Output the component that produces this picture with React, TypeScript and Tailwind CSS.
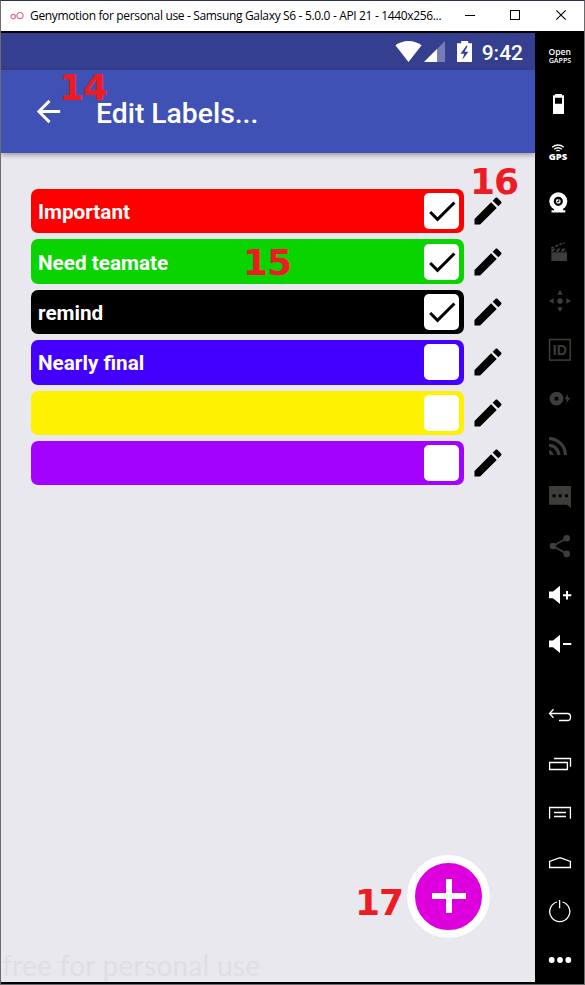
import React from "react";

const labels = [
  { name: "Important", bg: "bg-[#ff0000]", checked: true },
  { name: "Need teamate", bg: "bg-[#0ad400]", checked: true },
  { name: "remind", bg: "bg-black", checked: true },
  { name: "Nearly final", bg: "bg-[#4400ff]", checked: false },
  { name: "", bg: "bg-[#fff200]", checked: false },
  { name: "", bg: "bg-[#a200ff]", checked: false },
];

function TitleBar() {
  return (
    <div className="flex h-[30px] w-full shrink-0 items-center bg-white">
      <svg width="14" height="10" viewBox="0 0 14 10" className="ml-[9px] shrink-0" fill="none" stroke="#e4688f" strokeWidth="1.2">
        <circle cx="3.2" cy="5.6" r="2.2" />
        <circle cx="10" cy="4.6" r="3.1" />
      </svg>
      <div className="ml-[6px] w-[420px] whitespace-nowrap font-['Open_Sans','Noto_Sans',sans-serif] text-[12px] leading-[30px] tracking-[-0.34px] text-black">
        Genymotion for personal use - Samsung Galaxy S6 - 5.0.0 - API 21 - 1440x256...
      </div>
      <svg width="134" height="30" viewBox="450 1 134 30" className="shrink-0" fill="none" stroke="#000" shapeRendering="crispEdges">
        <path d="M465 15.5h10" />
        <rect x="510.5" y="10.5" width="9" height="9" />
        <path d="M556.3 10.3l9.4 9.4M565.7 10.3l-9.4 9.4" shapeRendering="auto" strokeWidth="1.1" />
      </svg>
    </div>
  );
}

function StatusBar() {
  return (
    <div className="flex h-[37px] shrink-0 items-center justify-end bg-[#34408f] pr-[12px] text-white">
      <svg width="80" height="24" viewBox="394 40 80 24" fill="#fff">
        <path d="M408.5 62 395.4 45.3C399 42.600 403.500 41 408.500 41s9.500 1.600 13.100 4.300z" />
        <path d="M445 41v21h-21z" fillOpacity=".32" />
        <path d="M437 49v13h-13z" />
        <path fillRule="evenodd" d="M461.200 41h7v2.200h3.800V62h-15V43.200h4.200zM466.300 45.700l-5.800 8h3.700l-1.900 6 6.200-8h-3.900l3.100-6z" />
      </svg>
      <span className="ml-[8px] mt-[3px] font-[Roboto,sans-serif] text-[21px] font-medium leading-[37px]">9:42</span>
    </div>
  );
}

function AppBar() {
  return (
    <div className="relative z-10 flex h-[83px] shrink-0 items-center bg-[#3f51b5] pl-[30px] text-white shadow-[0_2px_5px_rgba(0,0,0,0.35)]">
      <svg width="35" height="35" viewBox="0 0 24 24" fill="#fff">
        <path d="M20 11H7.830l5.590-5.590L12 4l-8 8 8 8 1.410-1.410L7.830 13H20v-2z" />
      </svg>
      <h1 className="ml-[30px] mt-[5px] font-[Roboto,sans-serif] text-[28.300px] font-medium leading-[34px]">Edit Labels...</h1>
    </div>
  );
}

function LabelRow({ name, bg, checked }: { name: string; bg: string; checked: boolean }) {
  return (
    <div className="flex h-[44.4px] items-center">
      <div className={`flex h-full w-[433px] items-center rounded-[7px] pl-[7px] pr-[5px] ${bg}`}>
        <span className="flex-1 pt-[2px] font-[Roboto,sans-serif] text-[20.700px] font-bold leading-[26px] text-white">{name}</span>
        <span className="flex h-[36px] w-[35px] items-center justify-center rounded-[5px] bg-white">
          {checked && (
            <svg width="36" height="36" viewBox="0 0 24 24" className="shrink-0">
              <path d="M9 16.170 4.830 12l-1.420 1.410L9 19 21 7l-1.410-1.410z" />
            </svg>
          )}
        </span>
      </div>
      <svg width="36" height="36" viewBox="0 0 24 24" className="ml-[5.500px] shrink-0">
        <path d="M3 17.250V21h3.750L17.810 9.940l-3.750-3.750L3 17.250zM20.710 7.040c.39-.39.39-1.020 0-1.410l-2.340-2.340c-.39-.39-1.020-.39-1.410 0l-1.830 1.830 3.750 3.750 1.830-1.830z" />
      </svg>
    </div>
  );
}

function Cell({ children, dim }: { children: React.ReactNode; dim?: boolean }) {
  return (
    <svg width="49" height="49" viewBox="0 0 49 49" className={`block shrink-0 ${dim ? "text-[#3d3d3a]" : "text-white"}`} fill="currentColor">
      {children}
    </svg>
  );
}

function Sidebar() {
  const line = { fill: "none", stroke: "currentColor", strokeWidth: 1.3 };
  return (
    <div className="flex w-[49px] shrink-0 flex-col bg-black">
      <Cell>
        <text x="13.500" y="24.300" textLength="22.500" lengthAdjust="spacingAndGlyphs" fontSize="9.500" fontWeight="600" fontFamily="Open Sans, sans-serif">Open</text>
        <text x="13.700" y="31.700" textLength="22.500" lengthAdjust="spacingAndGlyphs" fontSize="7" fontWeight="600" fontFamily="Open Sans, sans-serif">GAPPS</text>
      </Cell>
      <Cell>
        <path fillRule="evenodd" d="M20 14h7v1.300h2V34H18V15.300h2zM20 17.700v6h7v-6z" />
      </Cell>
      <Cell>
        <g fill="none" stroke="currentColor" strokeWidth="1.400">
          <path d="M17.200 18.300q5.800-4.600 11.600 0" />
          <path d="M19.200 20.300q3.800-3 7.600 0" />
          <path d="M21.300 22q1.700-1.300 3.400 0" />
        </g>
        <text x="13.700" y="31" textLength="18.600" lengthAdjust="spacingAndGlyphs" fontSize="8" fontWeight="800" fontFamily="Open Sans, sans-serif">GPS</text>
      </Cell>
      <Cell>
        <circle cx="23.300" cy="23.300" r="9" />
        <path d="M19 30h9v2.200h2.300v2.300H16.500v-2.300H19z" />
        <circle cx="23.300" cy="23.300" r="3.500" fill="none" stroke="#000" strokeWidth="2.200" />
        <path d="M23.800 21.200v2.500h-2" fill="none" stroke="#000" strokeWidth="1" />
      </Cell>
      <Cell dim>
        <path d="M16.300 25.300h15.700V34H16.300z" />
        <path d="M17.500 21.500h3l-2 3.300h-2.200v-2zM22.500 21.500h3l-2 3.300h-3zM27.500 21.500h3l-2 3.300h-3zM31.300 22.500v2.300h-1.500z" />
        <path d="M15.800 20.500l2-1 1.800 1.100-3 1.300zM19.500 18.700l2.500-1.100 1.800 1.300-2.500 1.100zM23.600 17l2.400-1 1.800 1.200-2.500 1.100zM27.500 15.700l1.800-.5.700 1.400-1 .400z" />
      </Cell>
      <Cell dim>
        <circle cx="25" cy="25" r="2.700" />
        <path d="M25 14l2.700 4.700h-5.400zM25 36l2.700-4.700h-5.400zM14 25l4.700-2.700v5.400zM36 25l-4.700-2.700v5.400z" />
      </Cell>
      <Cell dim>
        <rect x="14.600" y="14.500" width="20.600" height="20.600" fill="none" stroke="currentColor" strokeWidth="1.500" />
        <text x="17.800" y="30" textLength="14" lengthAdjust="spacingAndGlyphs" fontSize="14.500" fontWeight="600" fontFamily="Liberation Sans, sans-serif">ID</text>
      </Cell>
      <Cell dim>
        <circle cx="21.500" cy="24.700" r="4.500" fill="none" stroke="currentColor" strokeWidth="4.800" />
        <path d="M33 20l-3.400 5.200h2.500l-.8 4.200 4-5.600h-2.600z" />
      </Cell>
      <Cell dim>
        <g fill="none" stroke="currentColor" strokeWidth="3.200">
          <path d="M14 15.700A16.400 16.400 0 0 1 30.400 32" />
          <path d="M14 22.300A9.700 9.700 0 0 1 23.700 32" />
        </g>
        <path d="M14 27.500A4.500 4.500 0 0 1 18.500 32H15.800L14 30.200z" />
      </Cell>
      <Cell dim>
        <path d="M14 14h22v22l-4-3.300H14z" />
        <g fill="#000">
          <circle cx="19" cy="23.700" r="1.700" />
          <circle cx="25.200" cy="23.700" r="1.700" />
          <circle cx="31.500" cy="23.700" r="1.700" />
        </g>
      </Cell>
      <Cell dim>
        <circle cx="31.700" cy="17.200" r="3.300" />
        <circle cx="18" cy="25" r="3.300" />
        <circle cx="31.700" cy="32.900" r="3.300" />
        <path d="M31.700 17.200 18 25l13.700 7.900" fill="none" stroke="currentColor" strokeWidth="1.800" />
      </Cell>
      <Cell>
        <path d="M14 21.500h4l7-5.700V34l-7-5.700h-4z" />
        <path d="M28 25.300h8.300M32 21v8.600" stroke="currentColor" strokeWidth="2" />
      </Cell>
      <Cell>
        <path d="M14 21.500h4l7-5.700V34l-7-5.700h-4z" />
        <path d="M28 25h8.300" stroke="currentColor" strokeWidth="2" />
      </Cell>
      <div className="mt-[22px]">
        <Cell>
          <path {...line} d="M18.500 19.300 14.500 23.500l4 4.200M14.500 23.500H32.500c2 0 3 1.400 3 3.400 0 2.200-1.100 3.600-3 3.600H24" />
        </Cell>
      </div>
      <Cell>
        <path {...line} d="M14.600 23.500h17.800v7H14.600zM19 19.500h16.500v8.200" />
      </Cell>
      <Cell>
        <path {...line} d="M14.600 30.700V19.500h20.800v11.200M19 24.500h12M19 28.500h12" />
      </Cell>
      <Cell>
        <path {...line} d="M14.600 30.500v-6L25 20.700l10.400 3.800v6z" />
      </Cell>
      <Cell>
        <path {...line} d="M22 16A10 10 0 1 0 27.500 16M24.600 14v8.200" />
      </Cell>
      <Cell>
        <circle cx="16.700" cy="25" r="2.900" />
        <circle cx="25" cy="25" r="2.900" />
        <circle cx="33.300" cy="25" r="2.900" />
      </Cell>
    </div>
  );
}

function Marker({ text, place }: { text: string; place: string }) {
  return (
    <span className={`absolute z-20 font-['DejaVu_Sans',sans-serif] text-[36px] font-bold leading-[40px] tracking-[-1px] text-[#ed1c24] ${place}`}>
      {text}
    </span>
  );
}

export default function App() {
  return (
    <div className="relative flex h-[985px] w-[585px] flex-col overflow-hidden border border-t-[#2b3350] border-r-[#6b6b6b] border-b-[#6b6b6b] border-l-[#6b6b6b] bg-black">
      <TitleBar />
      <div className="flex min-h-0 flex-1">
        <div className="flex w-[534px] flex-col pb-[2px] pt-[2px]">
          <StatusBar />
          <AppBar />
          <main className="relative flex flex-1 flex-col bg-[#e9e8ee] pl-[30px] pt-[36px]">
            <div className="flex flex-col gap-[6px]">
              {labels.map((l, i) => (
                <LabelRow key={i} {...l} />
              ))}
            </div>
            <button className="absolute bottom-[44.500px] right-[45px] flex size-[83px] items-center justify-center rounded-full border-[8px] border-white bg-[#dd00dd]" aria-label="Add label">
              <svg width="34" height="34" viewBox="0 0 34 34" stroke="#fff" strokeWidth="6">
                <path d="M0 17h34M17 0v34" />
              </svg>
            </button>
            <span className="absolute bottom-[1px] left-[1px] whitespace-nowrap font-[Lato,sans-serif] text-[28px] leading-[32px] tracking-[0.27px] text-[#dfdfe3]">
              free for personal use
            </span>
          </main>
        </div>
        <Sidebar />
      </div>
      <Marker text="14" place="left-[58px] top-[67px]" />
      <Marker text="15" place="left-[242px] top-[242px]" />
      <Marker text="16" place="left-[469px] top-[161px]" />
      <Marker text="17" place="left-[354px] top-[882px]" />
    </div>
  );
}
